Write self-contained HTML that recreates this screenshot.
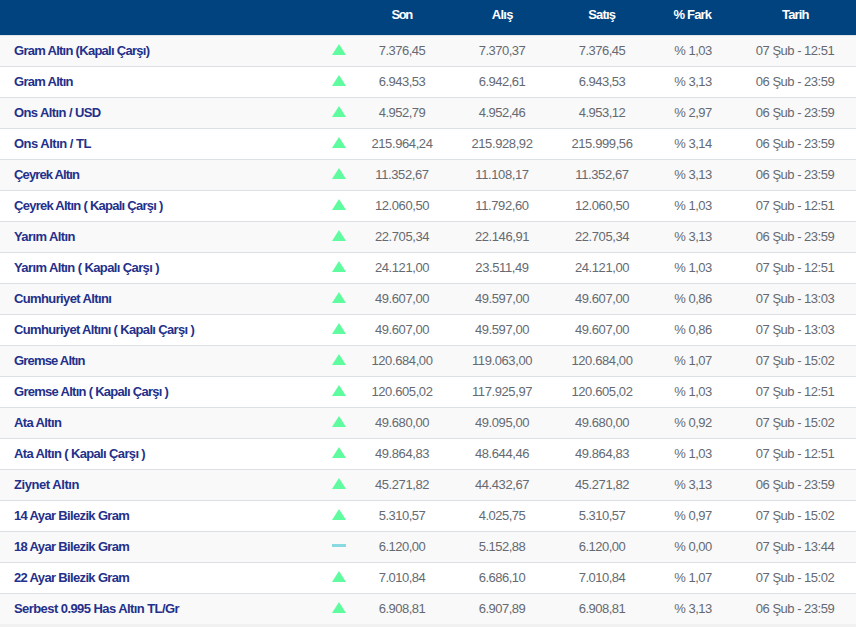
<!DOCTYPE html><html><head><meta charset="utf-8"><style>
*{margin:0;padding:0;box-sizing:border-box}
html,body{width:856px;height:627px;overflow:hidden;background:#f1f1f1;font-family:"Liberation Sans",sans-serif;font-size:13px}
#h{position:absolute;left:0;top:0;width:856px;height:35px;background:#00437f}
#h span{position:absolute;top:0;height:29px;line-height:29px;color:#fff;font-weight:bold;text-align:center;white-space:nowrap;letter-spacing:-0.3px}
.r{position:absolute;left:0;width:856px;border-bottom:1px solid #dde0e4}
.r span{position:absolute;bottom:0;height:30px;line-height:30px;white-space:nowrap}
.r .n{left:14px;color:#24308a;font-weight:bold;letter-spacing:-0.5px}
.r .v{color:#656a72;text-align:center;letter-spacing:-0.5px}
.tu{position:absolute;left:332px;width:0;height:0;border-left:7px solid transparent;border-right:7px solid transparent;border-bottom:11px solid #5efc9e}
.tf{position:absolute;left:332px;width:14px;height:3px;background:#89d9e3}
</style></head><body>
<div id="h"><span style="left:341.62px;width:120px;letter-spacing:-1.45px">Son</span><span style="left:442.22px;width:120px;letter-spacing:-0.77px">Alış</span><span style="left:541.74px;width:120px;letter-spacing:-0.83px">Satış</span><span style="left:632.37px;width:120px;letter-spacing:-0.86px">% Fark</span><span style="left:735.34px;width:120px;letter-spacing:-0.83px">Tarih</span></div>
<div class="r" style="top:35px;height:32px;background:#f9f9f9;border-top:1px solid #e0e3e7"><span class="n" style="letter-spacing:-0.725px">Gram Altın (Kapalı Çarşı)</span><i class="tu" style="top:8px"></i><span class="v" style="left:352px;width:100px">7.376,45</span><span class="v" style="left:452px;width:100px">7.370,37</span><span class="v" style="left:552px;width:100px">7.376,45</span><span class="v" style="left:653px;width:80px">% 1,03</span><span class="v" style="left:733px;width:124px">07 Şub - 12:51</span></div>
<div class="r" style="top:67px;height:31px;background:#ffffff"><span class="n" style="letter-spacing:-0.722px">Gram Altın</span><i class="tu" style="top:8px"></i><span class="v" style="left:352px;width:100px">6.943,53</span><span class="v" style="left:452px;width:100px">6.942,61</span><span class="v" style="left:552px;width:100px">6.943,53</span><span class="v" style="left:653px;width:80px">% 3,13</span><span class="v" style="left:733px;width:124px">06 Şub - 23:59</span></div>
<div class="r" style="top:98px;height:31px;background:#f9f9f9"><span class="n" style="letter-spacing:-0.600px">Ons Altın / USD</span><i class="tu" style="top:8px"></i><span class="v" style="left:352px;width:100px">4.952,79</span><span class="v" style="left:452px;width:100px">4.952,46</span><span class="v" style="left:552px;width:100px">4.953,12</span><span class="v" style="left:653px;width:80px">% 2,97</span><span class="v" style="left:733px;width:124px">06 Şub - 23:59</span></div>
<div class="r" style="top:129px;height:31px;background:#ffffff"><span class="n" style="letter-spacing:-0.515px">Ons Altın / TL</span><i class="tu" style="top:8px"></i><span class="v" style="left:352px;width:100px;letter-spacing:-0.4px">215.964,24</span><span class="v" style="left:452px;width:100px;letter-spacing:-0.4px">215.928,92</span><span class="v" style="left:552px;width:100px;letter-spacing:-0.4px">215.999,56</span><span class="v" style="left:653px;width:80px">% 3,14</span><span class="v" style="left:733px;width:124px">06 Şub - 23:59</span></div>
<div class="r" style="top:160px;height:31px;background:#f9f9f9"><span class="n" style="letter-spacing:-0.864px">Çeyrek Altın</span><i class="tu" style="top:8px"></i><span class="v" style="left:352px;width:100px;letter-spacing:-0.4px">11.352,67</span><span class="v" style="left:452px;width:100px;letter-spacing:-0.4px">11.108,17</span><span class="v" style="left:552px;width:100px;letter-spacing:-0.4px">11.352,67</span><span class="v" style="left:653px;width:80px">% 3,13</span><span class="v" style="left:733px;width:124px">06 Şub - 23:59</span></div>
<div class="r" style="top:191px;height:31px;background:#ffffff"><span class="n" style="letter-spacing:-0.736px">Çeyrek Altın ( Kapalı Çarşı )</span><i class="tu" style="top:8px"></i><span class="v" style="left:352px;width:100px;letter-spacing:-0.4px">12.060,50</span><span class="v" style="left:452px;width:100px;letter-spacing:-0.4px">11.792,60</span><span class="v" style="left:552px;width:100px;letter-spacing:-0.4px">12.060,50</span><span class="v" style="left:653px;width:80px">% 1,03</span><span class="v" style="left:733px;width:124px">07 Şub - 12:51</span></div>
<div class="r" style="top:222px;height:31px;background:#f9f9f9"><span class="n" style="letter-spacing:-0.590px">Yarım Altın</span><i class="tu" style="top:8px"></i><span class="v" style="left:352px;width:100px;letter-spacing:-0.4px">22.705,34</span><span class="v" style="left:452px;width:100px;letter-spacing:-0.4px">22.146,91</span><span class="v" style="left:552px;width:100px;letter-spacing:-0.4px">22.705,34</span><span class="v" style="left:653px;width:80px">% 3,13</span><span class="v" style="left:733px;width:124px">06 Şub - 23:59</span></div>
<div class="r" style="top:253px;height:31px;background:#ffffff"><span class="n" style="letter-spacing:-0.611px">Yarım Altın ( Kapalı Çarşı )</span><i class="tu" style="top:8px"></i><span class="v" style="left:352px;width:100px;letter-spacing:-0.4px">24.121,00</span><span class="v" style="left:452px;width:100px;letter-spacing:-0.4px">23.511,49</span><span class="v" style="left:552px;width:100px;letter-spacing:-0.4px">24.121,00</span><span class="v" style="left:653px;width:80px">% 1,03</span><span class="v" style="left:733px;width:124px">07 Şub - 12:51</span></div>
<div class="r" style="top:284px;height:31px;background:#f9f9f9"><span class="n" style="letter-spacing:-0.625px">Cumhuriyet Altını</span><i class="tu" style="top:8px"></i><span class="v" style="left:352px;width:100px;letter-spacing:-0.4px">49.607,00</span><span class="v" style="left:452px;width:100px;letter-spacing:-0.4px">49.597,00</span><span class="v" style="left:552px;width:100px;letter-spacing:-0.4px">49.607,00</span><span class="v" style="left:653px;width:80px">% 0,86</span><span class="v" style="left:733px;width:124px">07 Şub - 13:03</span></div>
<div class="r" style="top:315px;height:31px;background:#ffffff"><span class="n" style="letter-spacing:-0.658px">Cumhuriyet Altını ( Kapalı Çarşı )</span><i class="tu" style="top:8px"></i><span class="v" style="left:352px;width:100px;letter-spacing:-0.4px">49.607,00</span><span class="v" style="left:452px;width:100px;letter-spacing:-0.4px">49.597,00</span><span class="v" style="left:552px;width:100px;letter-spacing:-0.4px">49.607,00</span><span class="v" style="left:653px;width:80px">% 0,86</span><span class="v" style="left:733px;width:124px">07 Şub - 13:03</span></div>
<div class="r" style="top:346px;height:31px;background:#f9f9f9"><span class="n" style="letter-spacing:-0.818px">Gremse Altın</span><i class="tu" style="top:8px"></i><span class="v" style="left:352px;width:100px;letter-spacing:-0.4px">120.684,00</span><span class="v" style="left:452px;width:100px;letter-spacing:-0.4px">119.063,00</span><span class="v" style="left:552px;width:100px;letter-spacing:-0.4px">120.684,00</span><span class="v" style="left:653px;width:80px">% 1,07</span><span class="v" style="left:733px;width:124px">07 Şub - 15:02</span></div>
<div class="r" style="top:377px;height:31px;background:#ffffff"><span class="n" style="letter-spacing:-0.721px">Gremse Altın ( Kapalı Çarşı )</span><i class="tu" style="top:8px"></i><span class="v" style="left:352px;width:100px;letter-spacing:-0.4px">120.605,02</span><span class="v" style="left:452px;width:100px;letter-spacing:-0.4px">117.925,97</span><span class="v" style="left:552px;width:100px;letter-spacing:-0.4px">120.605,02</span><span class="v" style="left:653px;width:80px">% 1,03</span><span class="v" style="left:733px;width:124px">07 Şub - 12:51</span></div>
<div class="r" style="top:408px;height:31px;background:#f9f9f9"><span class="n" style="letter-spacing:-0.625px">Ata Altın</span><i class="tu" style="top:8px"></i><span class="v" style="left:352px;width:100px;letter-spacing:-0.4px">49.680,00</span><span class="v" style="left:452px;width:100px;letter-spacing:-0.4px">49.095,00</span><span class="v" style="left:552px;width:100px;letter-spacing:-0.4px">49.680,00</span><span class="v" style="left:653px;width:80px">% 0,92</span><span class="v" style="left:733px;width:124px">07 Şub - 15:02</span></div>
<div class="r" style="top:439px;height:31px;background:#ffffff"><span class="n" style="letter-spacing:-0.636px">Ata Altın ( Kapalı Çarşı )</span><i class="tu" style="top:8px"></i><span class="v" style="left:352px;width:100px;letter-spacing:-0.4px">49.864,83</span><span class="v" style="left:452px;width:100px;letter-spacing:-0.4px">48.644,46</span><span class="v" style="left:552px;width:100px;letter-spacing:-0.4px">49.864,83</span><span class="v" style="left:653px;width:80px">% 1,03</span><span class="v" style="left:733px;width:124px">07 Şub - 12:51</span></div>
<div class="r" style="top:470px;height:31px;background:#f9f9f9"><span class="n" style="letter-spacing:-0.445px">Ziynet Altın</span><i class="tu" style="top:8px"></i><span class="v" style="left:352px;width:100px;letter-spacing:-0.4px">45.271,82</span><span class="v" style="left:452px;width:100px;letter-spacing:-0.4px">44.432,67</span><span class="v" style="left:552px;width:100px;letter-spacing:-0.4px">45.271,82</span><span class="v" style="left:653px;width:80px">% 3,13</span><span class="v" style="left:733px;width:124px">06 Şub - 23:59</span></div>
<div class="r" style="top:501px;height:31px;background:#ffffff"><span class="n" style="letter-spacing:-0.658px">14 Ayar Bilezik Gram</span><i class="tu" style="top:8px"></i><span class="v" style="left:352px;width:100px">5.310,57</span><span class="v" style="left:452px;width:100px">4.025,75</span><span class="v" style="left:552px;width:100px">5.310,57</span><span class="v" style="left:653px;width:80px">% 0,97</span><span class="v" style="left:733px;width:124px">07 Şub - 15:02</span></div>
<div class="r" style="top:532px;height:31px;background:#f9f9f9"><span class="n" style="letter-spacing:-0.658px">18 Ayar Bilezik Gram</span><i class="tf" style="top:12px"></i><span class="v" style="left:352px;width:100px">6.120,00</span><span class="v" style="left:452px;width:100px">5.152,88</span><span class="v" style="left:552px;width:100px">6.120,00</span><span class="v" style="left:653px;width:80px">% 0,00</span><span class="v" style="left:733px;width:124px">07 Şub - 13:44</span></div>
<div class="r" style="top:563px;height:31px;background:#ffffff"><span class="n" style="letter-spacing:-0.658px">22 Ayar Bilezik Gram</span><i class="tu" style="top:8px"></i><span class="v" style="left:352px;width:100px">7.010,84</span><span class="v" style="left:452px;width:100px">6.686,10</span><span class="v" style="left:552px;width:100px">7.010,84</span><span class="v" style="left:653px;width:80px">% 1,07</span><span class="v" style="left:733px;width:124px">07 Şub - 15:02</span></div>
<div class="r" style="top:594px;height:31px;background:#f9f9f9;border-bottom-color:#f1f1f1"><span class="n" style="letter-spacing:-0.571px">Serbest 0.995 Has Altın TL/Gr</span><i class="tu" style="top:8px"></i><span class="v" style="left:352px;width:100px">6.908,81</span><span class="v" style="left:452px;width:100px">6.907,89</span><span class="v" style="left:552px;width:100px">6.908,81</span><span class="v" style="left:653px;width:80px">% 3,13</span><span class="v" style="left:733px;width:124px">06 Şub - 23:59</span></div>
</body></html>
